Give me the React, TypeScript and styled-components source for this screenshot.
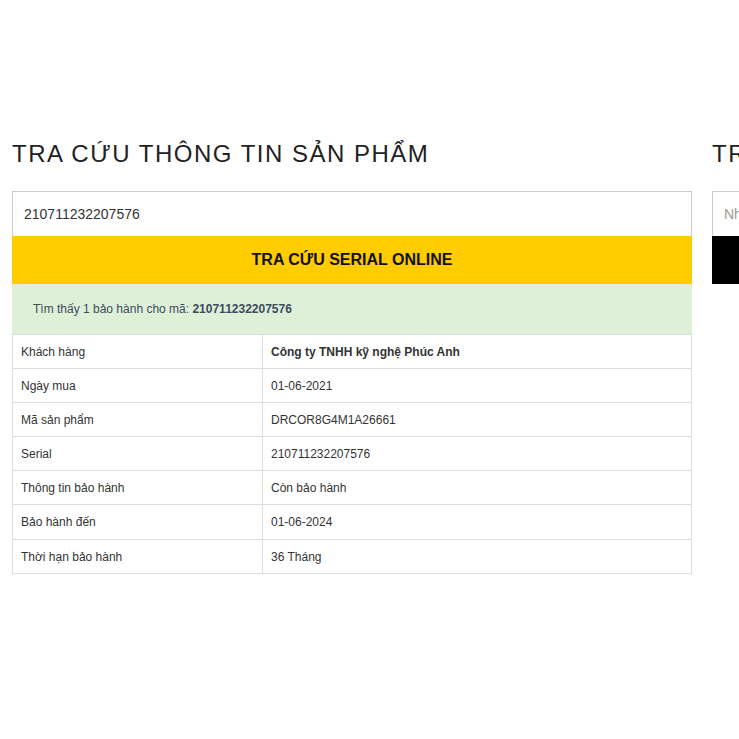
import React from "react";
import styled, { createGlobalStyle } from "styled-components";

const Global = createGlobalStyle`
  html, body { margin: 0; padding: 0; background: #fff; }
  body { font-family: "Liberation Sans", Arial, sans-serif; color: #333; overflow: hidden; }
  * { box-sizing: border-box; }
`;

const Page = styled.div`
  width: 739px;
  height: 739px;
  overflow: hidden;
  padding: 141px 0 0 12px;
`;

const Columns = styled.div`
  display: flex;
  gap: 20px;
  width: 1400px;
`;

const Column = styled.section`
  width: 680px;
  flex: none;
`;

const Heading = styled.h2`
  margin: 0 0 24px;
  font-size: 24px;
  line-height: 26px;
  font-weight: 400;
  letter-spacing: 1.5px;
  color: #222;
`;

const Input = styled.input`
  display: block;
  width: 100%;
  height: 45px;
  border: 1px solid #ccc;
  border-bottom: none;
  padding: 0 11px;
  font-family: inherit;
  font-size: 14px;
  color: #333;
  outline: none;
  &::placeholder { color: #999; }
`;

const Button = styled.button<{ $dark?: boolean }>`
  display: block;
  width: 100%;
  height: 48px;
  border: none;
  background: ${(p) => (p.$dark ? "#000" : "#ffcc00")};
  color: ${(p) => (p.$dark ? "#fff" : "#111")};
  font-family: inherit;
  font-size: 16px;
  font-weight: 700;
  cursor: pointer;
`;

const Alert = styled.div`
  height: 50px;
  display: flex;
  align-items: center;
  padding: 0 21px;
  background: #dff0d8;
  color: #3d4b5c;
  font-size: 12px;
  b { font-weight: 700; }
`;

const Table = styled.table`
  width: 100%;
  border-collapse: collapse;
  font-size: 12px;
  color: #333;
`;

const Cell = styled.td<{ $label?: boolean; $strong?: boolean; $tall?: boolean }>`
  border: 1px solid #ddd;
  height: ${(p) => (p.$tall ? "35px" : "34px")};
  padding: 0 8px;
  width: ${(p) => (p.$label ? "250px" : "auto")};
  font-weight: ${(p) => (p.$strong ? 700 : 400)};
`;

const rows: [string, string, boolean?][] = [
  ["Khách hàng", "Công ty TNHH kỹ nghệ Phúc Anh", true],
  ["Ngày mua", "01-06-2021"],
  ["Mã sản phẩm", "DRCOR8G4M1A26661"],
  ["Serial", "210711232207576"],
  ["Thông tin bảo hành", "Còn bảo hành"],
  ["Bảo hành đến", "01-06-2024"],
  ["Thời hạn bảo hành", "36 Tháng"],
];

export default function App() {
  return (
    <>
      <Global />
      <Page>
        <Columns>
          <Column>
            <Heading>TRA CỨU THÔNG TIN SẢN PHẨM</Heading>
            <Input defaultValue="210711232207576" />
            <Button>TRA CỨU SERIAL ONLINE</Button>
            <Alert>
              <span>
                Tìm thấy 1 bảo hành cho mã: <b>210711232207576</b>
              </span>
            </Alert>
            <Table>
              <tbody>
                {rows.map(([k, v, s], i) => (
                  <tr key={k}>
                    <Cell $label $tall={i === 5}>{k}</Cell>
                    <Cell $strong={s} $tall={i === 5}>{v}</Cell>
                  </tr>
                ))}
              </tbody>
            </Table>
          </Column>
          <Column>
            <Heading>TRA CỨU THÔNG TIN BẢO HÀNH</Heading>
            <Input placeholder="Nhập số serial" />
            <Button $dark>TRA CỨU</Button>
          </Column>
        </Columns>
      </Page>
    </>
  );
}
